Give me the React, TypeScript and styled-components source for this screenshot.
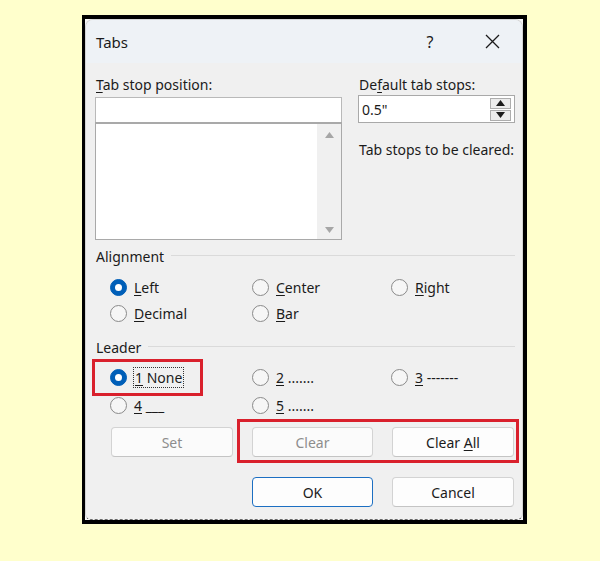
import React from 'react';
import styled, { createGlobalStyle } from 'styled-components';

const Global = createGlobalStyle`
  html, body { margin: 0; padding: 0; background: #ffffcc; }
  body {
    width: 600px; height: 561px; overflow: hidden;
    font-family: "Segoe UI", "Noto Sans", "Open Sans", sans-serif;
    color: #1b1b1b;
  }
`;

const Page = styled.div`
  width: 600px;
  height: 561px;
  box-sizing: border-box;
  padding: 15px 0 0 82px;
`;

const Frame = styled.div`
  width: 438px;
  height: 501px;
  border: 4px solid #000;
  border-left-width: 3px;
  background: #f7f7f7;
`;

const Dialog = styled.div`
  position: relative;
  box-sizing: border-box;
  width: 100%;
  height: 100%;
  display: flex;
  flex-direction: column;
  background: #f0f0f0;
  border: 1px solid #d4d4d4;
  border-bottom: 1px dashed #6a6a6a;
  border-radius: 8px 8px 6px 6px;
  overflow: hidden;
`;

const TitleBar = styled.div`
  height: 43px;
  flex: none;
  display: flex;
  align-items: center;
  background: #eef2f6;
`;

const Title = styled.div`
  flex: 1;
  padding-left: 10px;
  font-size: 15px;
`;

const TitleButton = styled.div<{ $w: number }>`
  width: ${(p) => p.$w}px;
  height: 100%;
  display: flex;
  align-items: center;
  justify-content: center;
  font-size: 16px;
  color: #1b1b1b;
`;

const Body = styled.div`
  position: relative;
  flex: 1;
  padding: 13px 7px 0 9px;
  font-size: 14px;
`;

const TopSection = styled.div`
  display: grid;
  grid-template-columns: 247px 157px;
  column-gap: 16px;
`;

const Column = styled.div`
  display: flex;
  flex-direction: column;
`;

const Label = styled.div<{ $mt?: number }>`
  height: 18px;
  line-height: 18px;
  padding-left: 1px;
  margin-top: ${(p) => p.$mt ?? 0}px;
  white-space: nowrap;
`;

const Acc = styled.span`
  text-decoration: underline;
  text-underline-offset: 2px;
  text-decoration-thickness: 1px;
`;

const TextInput = styled.div`
  box-sizing: border-box;
  height: 26px;
  margin-top: 3px;
  background: #fff;
  border: 1px solid #b9b9b9;
`;

const ListBox = styled.div`
  box-sizing: border-box;
  height: 118px;
  margin-top: -1px;
  background: #fff;
  border: 1px solid #a9a9a9;
  border-top: 2px solid #a9a9a9;
  display: flex;
  justify-content: flex-end;
`;

const ScrollBar = styled.div`
  width: 24px;
  background: #f0f0f0;
  display: flex;
  flex-direction: column;
  justify-content: space-between;
  align-items: center;
  padding: 8px 0 6px;
`;

const SpinBox = styled.div`
  box-sizing: border-box;
  height: 28px;
  margin-top: 1px;
  background: #fff;
  border: 1px solid #a9a9a9;
  display: flex;
  align-items: center;
  padding: 0 3px 0 3px;
`;

const SpinValue = styled.div`
  flex: 1;
  font-size: 14px;
`;

const SpinButtons = styled.div`
  display: flex;
  flex-direction: column;
  gap: 1px;
`;

const SpinButton = styled.div`
  box-sizing: border-box;
  width: 21px;
  height: 11px;
  border: 1px solid #adadad;
  background: #ececec;
  display: flex;
  align-items: center;
  justify-content: center;
`;

const SectionHead = styled.div<{ $mt: number }>`
  display: flex;
  align-items: center;
  gap: 7px;
  height: 18px;
  margin-top: ${(p) => p.$mt}px;
  padding-left: 1px;
  &::after {
    content: '';
    flex: 1;
    height: 1px;
    margin-top: -2px;
    background: #dadada;
  }
`;

const RadioGrid = styled.div<{ $mt: number; $row: number }>`
  display: grid;
  grid-template-columns: 142px 139px 1fr;
  grid-auto-rows: ${(p) => p.$row}px;
  margin-top: ${(p) => p.$mt}px;
  padding-left: 15px;
`;

const RadioItem = styled.div`
  position: relative;
  display: flex;
  align-items: center;
  gap: 7px;
  white-space: nowrap;
`;

const RadioCircle = styled.span<{ $on?: boolean }>`
  box-sizing: border-box;
  width: 17px;
  height: 17px;
  border-radius: 50%;
  flex: none;
  display: flex;
  align-items: center;
  justify-content: center;
  background: ${(p) => (p.$on ? '#005fb8' : '#f6f6f6')};
  border: 1px solid ${(p) => (p.$on ? '#005fb8' : '#8a8a8a')};
  &::after {
    content: '';
    display: ${(p) => (p.$on ? 'block' : 'none')};
    width: 7px;
    height: 7px;
    border-radius: 50%;
    background: #fff;
  }
`;

const FocusText = styled.span`
  outline: 1px dotted #333;
  outline-offset: 0px;
  padding: 0 1px;
  line-height: 19px;
`;

const Highlight = styled.div<{ $t: number; $l: number; $r: number; $b: number }>`
  position: absolute;
  top: ${(p) => p.$t}px;
  left: ${(p) => p.$l}px;
  right: ${(p) => p.$r}px;
  bottom: ${(p) => p.$b}px;
  border: 3px solid #d9202c;
  pointer-events: none;
`;

const ButtonGrid = styled.div`
  display: grid;
  grid-template-columns: 122px 121px 122px;
  grid-auto-rows: 30px;
  column-gap: 19px;
  row-gap: 20px;
  margin-top: 8px;
  padding-left: 16px;
`;

const GroupCell = styled.div`
  position: relative;
  grid-column: 2 / span 2;
  display: grid;
  grid-template-columns: 121px 122px;
  column-gap: 19px;
`;

const Button = styled.div<{ $disabled?: boolean; $primary?: boolean; $col?: number }>`
  box-sizing: border-box;
  grid-column: ${(p) => p.$col ?? 'auto'};
  display: flex;
  align-items: center;
  justify-content: center;
  border-radius: 4px;
  background: ${(p) => (p.$disabled ? '#fbfbfb' : '#fdfdfd')};
  border: 1px solid ${(p) => (p.$primary ? '#1c6fc2' : '#d3d3d3')};
  border-bottom-color: ${(p) => (p.$primary ? '#1c6fc2' : '#c4c4c4')};
  color: ${(p) => (p.$disabled ? '#8d8d8d' : '#1b1b1b')};
  font-size: 14px;
`;

const Tri = ({ dir, color }: { dir: 'up' | 'down'; color: string }) => (
  <svg width="9" height="6" viewBox="0 0 9 6">
    {dir === 'up' ? (
      <polygon points="0,6 9,6 4.5,0" fill={color} />
    ) : (
      <polygon points="0,0 9,0 4.5,6" fill={color} />
    )}
  </svg>
);

const CloseIcon = () => (
  <svg width="15" height="15" viewBox="0 0 15 15">
    <path d="M1 1 L14 14 M14 1 L1 14" stroke="#1b1b1b" strokeWidth="1.3" fill="none" />
  </svg>
);

export default function App() {
  return (
    <>
      <Global />
      <Page>
        <Frame>
          <Dialog>
            <TitleBar>
              <Title>Tabs</Title>
              <TitleButton $w={64}>?</TitleButton>
              <TitleButton $w={60}>
                <CloseIcon />
              </TitleButton>
            </TitleBar>
            <Body>
              <TopSection>
                <Column>
                  <Label>
                    <Acc>T</Acc>ab stop position:
                  </Label>
                  <TextInput />
                  <ListBox>
                    <ScrollBar>
                      <Tri dir="up" color="#a6a6a6" />
                      <Tri dir="down" color="#a6a6a6" />
                    </ScrollBar>
                  </ListBox>
                </Column>
                <Column>
                  <Label>
                    De<Acc>f</Acc>ault tab stops:
                  </Label>
                  <SpinBox>
                    <SpinValue>0.5"</SpinValue>
                    <SpinButtons>
                      <SpinButton>
                        <Tri dir="up" color="#1b1b1b" />
                      </SpinButton>
                      <SpinButton>
                        <Tri dir="down" color="#1b1b1b" />
                      </SpinButton>
                    </SpinButtons>
                  </SpinBox>
                  <Label $mt={18}>Tab stops to be cleared:</Label>
                </Column>
              </TopSection>

              <SectionHead $mt={7}>Alignment</SectionHead>
              <RadioGrid $mt={9} $row={26}>
                <RadioItem>
                  <RadioCircle $on />
                  <span>
                    <Acc>L</Acc>eft
                  </span>
                </RadioItem>
                <RadioItem>
                  <RadioCircle />
                  <span>
                    <Acc>C</Acc>enter
                  </span>
                </RadioItem>
                <RadioItem>
                  <RadioCircle />
                  <span>
                    <Acc>R</Acc>ight
                  </span>
                </RadioItem>
                <RadioItem>
                  <RadioCircle />
                  <span>
                    <Acc>D</Acc>ecimal
                  </span>
                </RadioItem>
                <RadioItem>
                  <RadioCircle />
                  <span>
                    <Acc>B</Acc>ar
                  </span>
                </RadioItem>
              </RadioGrid>

              <SectionHead $mt={12}>Leader</SectionHead>
              <RadioGrid $mt={7} $row={28}>
                <RadioItem>
                  <RadioCircle $on />
                  <FocusText>
                    <Acc>1</Acc> None
                  </FocusText>
                  <Highlight $t={-4} $l={-18} $r={49} $b={-5} />
                </RadioItem>
                <RadioItem>
                  <RadioCircle />
                  <span>
                    <Acc>2</Acc> .......
                  </span>
                </RadioItem>
                <RadioItem>
                  <RadioCircle />
                  <span>
                    <Acc>3</Acc> -------
                  </span>
                </RadioItem>
                <RadioItem>
                  <RadioCircle />
                  <span>
                    <Acc>4</Acc> ___
                  </span>
                </RadioItem>
                <RadioItem>
                  <RadioCircle />
                  <span>
                    <Acc>5</Acc> .......
                  </span>
                </RadioItem>
              </RadioGrid>

              <ButtonGrid>
                <Button $disabled>Set</Button>
                <GroupCell>
                  <Button $disabled>Clear</Button>
                  <Button>
                    Clear&nbsp;<Acc>A</Acc>ll
                  </Button>
                  <Highlight $t={-8} $l={-15} $r={-5} $b={-6} />
                </GroupCell>
                <Button $primary $col={2}>
                  OK
                </Button>
                <Button $col={3}>Cancel</Button>
              </ButtonGrid>
            </Body>
          </Dialog>
        </Frame>
      </Page>
    </>
  );
}
